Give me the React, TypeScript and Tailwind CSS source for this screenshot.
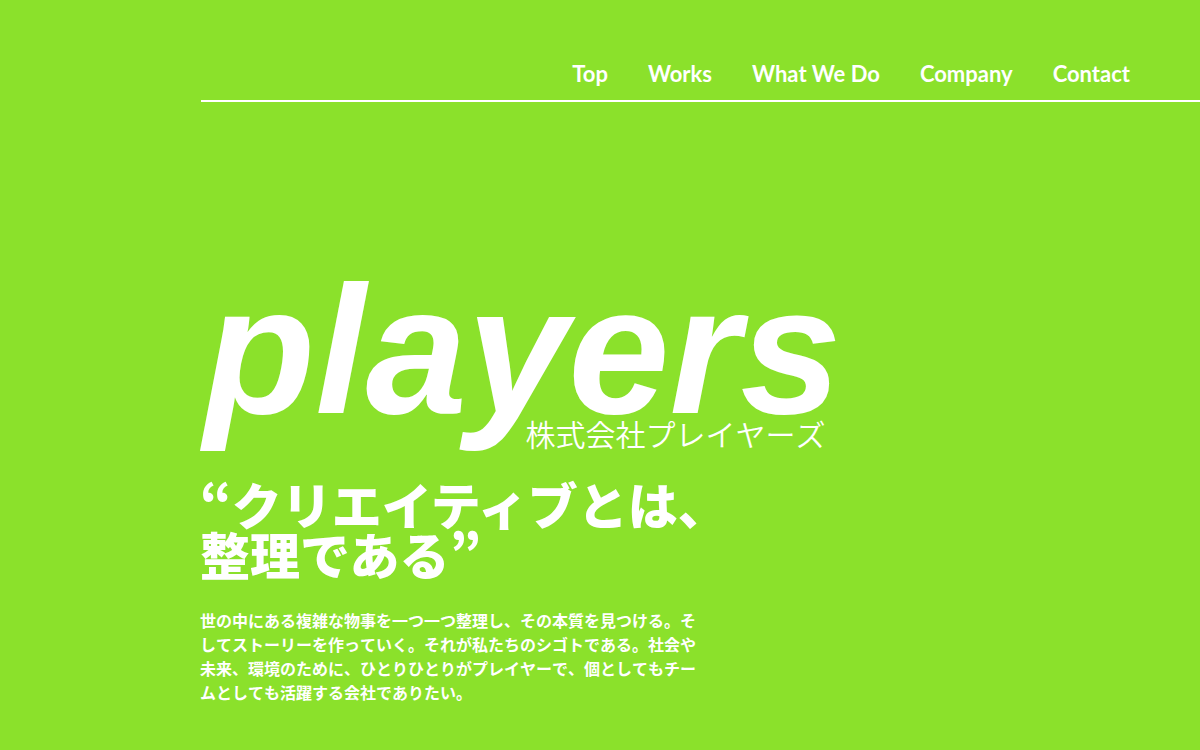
const navItems = [
  { label: "Top", href: "#top" },
  { label: "Works", href: "#works" },
  { label: "What We Do", href: "#what-we-do" },
  { label: "Company", href: "#company" },
  { label: "Contact", href: "#contact" },
];

const Header = () => (
  <header className="ml-[201px] flex h-[102px] items-end justify-end border-b-2 border-white pb-[10px] pr-[70px]">
    <nav className="flex gap-10 font-['Lato','Liberation_Sans',sans-serif] text-[22px] font-bold leading-8">
      {navItems.map((item) => (
        <a key={item.label} href={item.href} className="whitespace-nowrap">
          {item.label}
        </a>
      ))}
    </nav>
  </header>
);

const Hero = () => (
  <main
    id="top"
    className="ml-[200px] pt-[180px] font-['Noto_Sans_CJK_JP',sans-serif]"
  >
    <h1 className="w-fit pl-1">
      <span className="block font-['Liberation_Sans',Arial,sans-serif] text-[182px] font-bold italic leading-[136px]">
        players
      </span>
      <span className="block pr-4 text-right text-[30px] font-[350] leading-[30px] [font-kerning:none]">
        株式会社プレイヤーズ
      </span>
    </h1>
    <h2 className="mt-[30px] text-[50px] font-black leading-[50px]">
      “クリエイティブとは、
      <br />
      整理である”
    </h2>
    <p className="mt-[30px] w-[500px] text-base font-bold leading-6 [font-kerning:none]">
      世の中にある複雑な物事を一つ一つ整理し、その本質を見つける。そしてストーリーを作っていく。それが私たちのシゴトである。社会や未来、環境のために、ひとりひとりがプレイヤーで、個としてもチームとしても活躍する会社でありたい。
    </p>
  </main>
);

const App = () => (
  <div lang="ja" className="min-h-screen bg-[#8be12b] text-white">
    <Header />
    <Hero />
  </div>
);

export default App;
